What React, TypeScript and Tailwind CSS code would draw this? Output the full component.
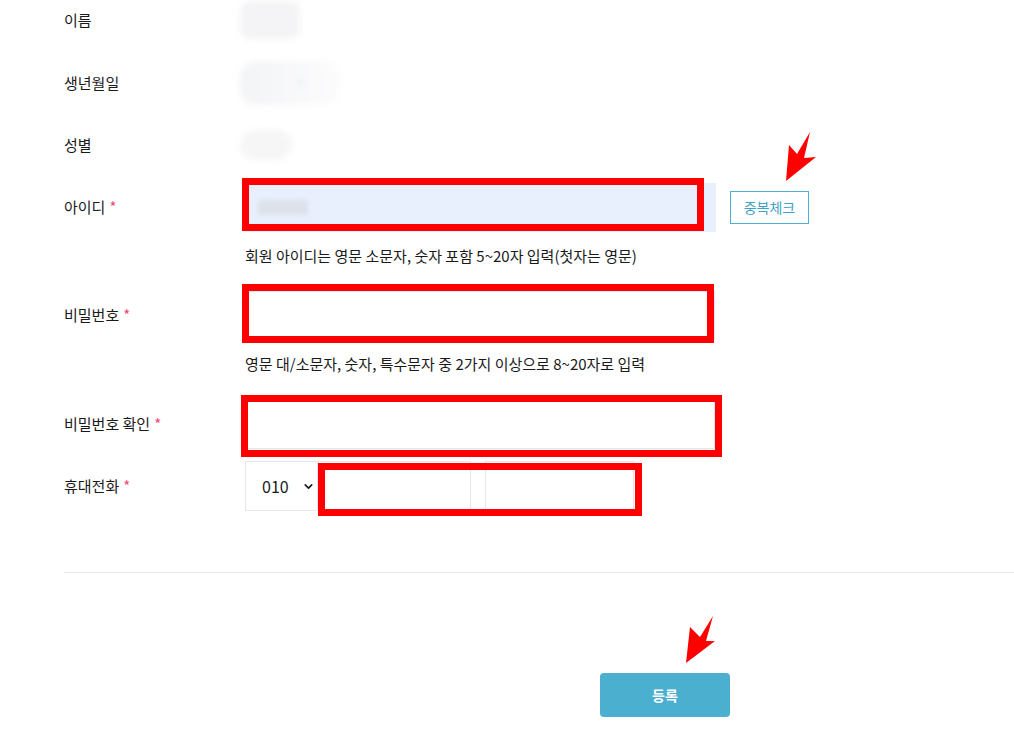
import { ChevronDown } from 'lucide-react';

const Label = ({ text, required }: { text: string; required?: boolean }) => (
  <div className="w-[181px] shrink-0 text-[15px] text-[#1a1a1a]">
    {text}
    {required && <span className="ml-1 text-[#ee4b7b]">*</span>}
  </div>
);

const RedBox = ({ className }: { className: string }) => (
  <div className={`pointer-events-none absolute border-[7px] border-[#ff0000] ${className}`} />
);

const App = () => {
  return (
    <div className="relative h-[752px] w-[1014px] overflow-hidden bg-white font-['Noto_Sans_CJK_KR','Noto_Sans',sans-serif]">
      <div className="pl-[64px]">
        {/* 이름 */}
        <div className="flex h-[40px] items-center">
          <Label text="이름" />
          <div className="-ml-[5px] h-[38px] w-[60px] rounded-[10px] bg-[#f4f4f6] blur-[3px]" />
        </div>

        {/* 생년월일 */}
        <div className="mt-[18px] flex h-[50px] items-center">
          <Label text="생년월일" />
          <div className="-ml-[5px] flex h-[44px] w-[100px] items-center rounded-[16px] bg-gradient-to-r from-[#f3f4f6] to-[#fcfcfd] blur-[3px]">
            <span className="ml-[60px] h-[6px] w-[2px] bg-[#dcdcdf]" />
          </div>
        </div>

        {/* 성별 */}
        <div className="mt-[12px] flex h-[50px] items-center">
          <Label text="성별" />
          <div className="-ml-[5px] h-[30px] w-[52px] rounded-full bg-[#f6f6f7] blur-[3px]" />
        </div>

        {/* 아이디 */}
        <div className="mt-[13px] flex h-[49px] items-center">
          <Label text="아이디" required />
          <div className="relative h-[49px] w-[471px] bg-[#e8f0fe]">
            <div className="absolute left-[13px] top-[17px] h-[15px] w-[50px] rounded-[3px] bg-[#dde1e8] blur-[2px]" />
            <RedBox className="left-[-3px] top-[-5px] h-[53px] w-[462px]" />
          </div>
          <button className="ml-[14px] h-[33px] w-[79px] border border-[#4eb0cf] bg-white text-[14px] text-[#3fa3c6]">
            중복체크
          </button>
        </div>
        <div className="ml-[181px] mt-[14px] h-[20px] text-[15px] leading-[20px] text-[#1a1a1a]">
          회원 아이디는 영문 소문자, 숫자 포함 5~20자 입력(첫자는 영문)
        </div>

        {/* 비밀번호 */}
        <div className="mt-[25px] flex h-[49px] items-center">
          <Label text="비밀번호" required />
          <div className="relative h-[49px] w-[470px] border border-[#e4e8ec] bg-white">
            <RedBox className="left-[-4px] top-[-8px] h-[59px] w-[472px]" />
          </div>
        </div>
        <div className="ml-[181px] mt-[14px] h-[20px] text-[15px] leading-[20px] text-[#1a1a1a]">
          영문 대/소문자, 숫자, 특수문자 중 2가지 이상으로 8~20자로 입력
        </div>

        {/* 비밀번호 확인 */}
        <div className="mt-[26px] flex h-[49px] items-center">
          <Label text="비밀번호 확인" required />
          <div className="relative h-[49px] w-[470px] border border-[#e4e8ec] bg-white">
            <RedBox className="left-[-5px] top-[-6px] h-[62px] w-[481px]" />
          </div>
        </div>

        {/* 휴대전화 */}
        <div className="mt-[12px] flex h-[50px] items-center">
          <Label text="휴대전화" required />
          <div className="relative flex h-[50px]">
            <div className="flex w-[73px] items-center border border-[#e4e8ec] pl-[16px] text-[16px] text-[#1a1a1a]">
              010
              <ChevronDown className="ml-[13px] h-[13px] w-[13px]" strokeWidth={3} />
            </div>
            <div className="w-[153px] border border-[#e4e8ec]" />
            <div className="ml-[14px] w-[149px] border border-[#e4e8ec]" />
            <RedBox className="left-[73px] top-[2px] h-[53px] w-[324px]" />
          </div>
        </div>

        <div className="mt-[61px] border-t border-[#e6eaee]" />

        <button className="ml-[536px] mt-[100px] h-[44px] w-[130px] rounded-[4px] bg-[#4bafcf] text-[14px] font-bold text-white">
          등록
        </button>
      </div>

      {/* annotation arrows */}
      <svg className="pointer-events-none absolute left-0 top-0" width="1014" height="752">
        <polygon points="786,181 789,145 797,154 810,132 804,158 816,157" fill="#ff0000" />
        <polygon points="686,663 690,627 700,637 713,616 706,641 715,641" fill="#ff0000" />
      </svg>
    </div>
  );
};

export default App;
